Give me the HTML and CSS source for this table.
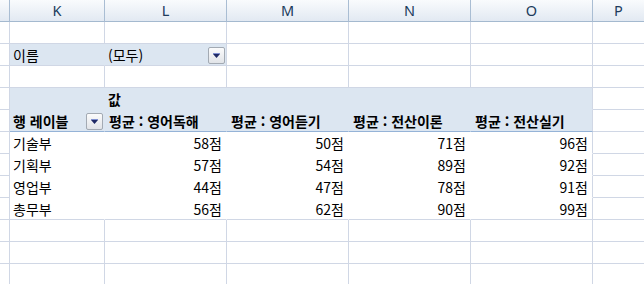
FILE: index.html
```html
<!DOCTYPE html>
<html lang="ko">
<head>
<meta charset="utf-8">
<link rel="stylesheet" href="styles.css">
</head>
<body>
<div class="sheet">
  <!-- column header row -->
  <div class="c h"></div>
  <div class="c h">K</div>
  <div class="c h">L</div>
  <div class="c h">M</div>
  <div class="c h">N</div>
  <div class="c h">O</div>
  <div class="c h p">P</div>

  <!-- row 1 -->
  <div class="c"></div><div class="c"></div><div class="c"></div><div class="c"></div><div class="c"></div><div class="c"></div><div class="c p"></div>

  <!-- row 2: filter -->
  <div class="c"></div>
  <div class="c fill fr">이름</div>
  <div class="c fill drop">(모두)<span class="btn"><svg width="7" height="5" viewBox="0 0 7 5"><rect x="0" y="0" width="7" height="1" fill="#7f8fd0"/><polygon points="0,1 7,1 3.5,5" fill="#1f2a66"/></svg></span></div>
  <div class="c"></div><div class="c"></div><div class="c"></div><div class="c p"></div>

  <!-- row 3 -->
  <div class="c"></div><div class="c"></div><div class="c"></div><div class="c"></div><div class="c"></div><div class="c"></div><div class="c p"></div>

  <!-- row 4: 값 -->
  <div class="c"></div>
  <div class="c fill fr fb"></div>
  <div class="c fill fr fb b">값</div>
  <div class="c fill fr fb"></div>
  <div class="c fill fr fb"></div>
  <div class="c fill fb"></div>
  <div class="c p"></div>

  <!-- row 5: labels -->
  <div class="c"></div>
  <div class="c fill fr hb b drop">행 레이블<span class="btn"><svg width="7" height="5" viewBox="0 0 7 5"><rect x="0" y="0" width="7" height="1" fill="#7f8fd0"/><polygon points="0,1 7,1 3.5,5" fill="#1f2a66"/></svg></span></div>
  <div class="c fill fr hb b lbl">평균 : 영어독해</div>
  <div class="c fill fr hb b lbl">평균 : 영어듣기</div>
  <div class="c fill fr hb b lbl">평균 : 전산이론</div>
  <div class="c fill hb b lbl">평균 : 전산실기</div>
  <div class="c p"></div>

  <!-- data rows -->
  <div class="c"></div>
  <div class="c d">기술부</div>
  <div class="c d n">58점</div>
  <div class="c d n">50점</div>
  <div class="c d n">71점</div>
  <div class="c d n e">96점</div>
  <div class="c p"></div>

  <div class="c"></div>
  <div class="c d">기획부</div>
  <div class="c d n">57점</div>
  <div class="c d n">54점</div>
  <div class="c d n">89점</div>
  <div class="c d n e">92점</div>
  <div class="c p"></div>

  <div class="c"></div>
  <div class="c d">영업부</div>
  <div class="c d n">44점</div>
  <div class="c d n">47점</div>
  <div class="c d n">78점</div>
  <div class="c d n e">91점</div>
  <div class="c p"></div>

  <div class="c"></div>
  <div class="c d last">총무부</div>
  <div class="c d n last">56점</div>
  <div class="c d n last">62점</div>
  <div class="c d n last">90점</div>
  <div class="c d n e last">99점</div>
  <div class="c p"></div>

  <!-- empty rows -->
  <div class="c"></div><div class="c"></div><div class="c"></div><div class="c"></div><div class="c"></div><div class="c"></div><div class="c p"></div>
  <div class="c"></div><div class="c"></div><div class="c"></div><div class="c"></div><div class="c"></div><div class="c"></div><div class="c p"></div>
  <div class="c"></div><div class="c"></div><div class="c"></div><div class="c"></div><div class="c"></div><div class="c"></div><div class="c p"></div>
</div>
</body>
</html>
```

FILE: styles.css
```css
html, body {
  margin: 0;
  padding: 0;
  background: #ffffff;
  overflow: hidden;
}

.sheet {
  display: grid;
  grid-template-columns: 10px 95px 122px 122px 122px 122px 51px;
  grid-auto-rows: 22px;
  width: 644px;
}

.c {
  box-sizing: border-box;
  border-right: 1px solid #d0d7e5;
  border-bottom: 1px solid #d0d7e5;
  font-family: "Noto Sans CJK KR", "Noto Sans", sans-serif;
  font-size: 14px;
  line-height: 21px;
  padding: 1px 3px 0 3px;
  color: #000;
  white-space: nowrap;
  overflow: hidden;
}

.p {
  border-right: none;
}

.h {
  background: linear-gradient(#f9fbfd, #e2e9f2);
  border-right-color: #a9bdd3;
  border-bottom-color: #a4b9cf;
  text-align: center;
  color: #203b5c;
  font-family: "Noto Sans", "Liberation Sans", sans-serif;
  font-size: 14.5px;
  padding: 0;
  line-height: 21px;
}

.fill {
  background: #dce6f1;
}

.fr {
  border-right-color: #dce6f1;
}

.fb {
  border-bottom-color: #dce6f1;
}

.hb {
  border-bottom-color: #95b3d7;
}

.b {
  font-weight: bold;
}

.lbl {
  word-spacing: 0;
  padding-left: 4px;
}

.drop {
  display: flex;
  align-items: center;
  justify-content: space-between;
  padding-right: 0;
}

.btn {
  box-sizing: border-box;
  width: 17px;
  height: 17px;
  margin-right: 1px;
  border: 1px solid #a3aab3;
  border-radius: 2px;
  background: linear-gradient(#fbfbfc, #e1e4e8);
  display: flex;
  align-items: center;
  justify-content: center;
  flex: none;
}

.btn svg {
  display: block;
  margin-top: 1px;
}

.d {
  border-right-color: #ffffff;
  border-bottom-color: #ffffff;
}

.n {
  text-align: right;
  padding-right: 4px;
}

.e {
  border-right-color: #d0d7e5;
}

.last {
  border-bottom-color: #d0d7e5;
}
```
